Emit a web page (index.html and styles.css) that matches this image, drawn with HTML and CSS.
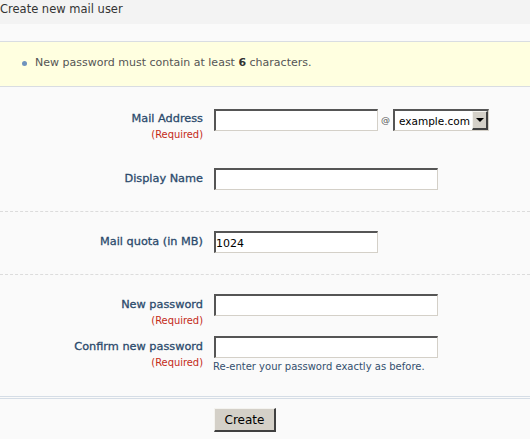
FILE: index.html
```html
<!DOCTYPE html>
<html>
<head>
<meta charset="utf-8">
<title>Create new mail user</title>
<link rel="stylesheet" href="styles.css">
</head>
<body>
<div class="page">
  <h1 class="title">Create new mail user</h1>
  <div class="notice">
    <ul class="notice-list">
      <li class="notice-item"><span class="dot"></span><span>New password must contain at least <b>6</b> characters.</span></li>
    </ul>
  </div>
  <form class="form">
    <div class="section first">
      <div class="row">
        <div class="label-cell">
          <label class="label">Mail Address</label>
          <span class="req">(Required)</span>
        </div>
        <div class="field-cell">
          <div class="inline">
            <input class="input short" type="text">
            <span class="at">@</span>
            <span class="select">
              <select class="select-native"><option>example.com</option></select>
              <span class="select-btn"><span class="tri"></span></span>
            </span>
          </div>
        </div>
      </div>
      <div class="row row-gap-lg">
        <div class="label-cell">
          <label class="label">Display Name</label>
        </div>
        <div class="field-cell">
          <input class="input long" type="text">
        </div>
      </div>
    </div>
    <div class="section dashed">
      <div class="row">
        <div class="label-cell">
          <label class="label">Mail quota (in MB)</label>
        </div>
        <div class="field-cell">
          <input class="input short" type="text" value="1024">
        </div>
      </div>
    </div>
    <div class="section dashed last">
      <div class="row">
        <div class="label-cell">
          <label class="label">New password</label>
          <span class="req">(Required)</span>
        </div>
        <div class="field-cell">
          <input class="input long" type="password">
        </div>
      </div>
      <div class="row row-gap-sm">
        <div class="label-cell">
          <label class="label">Confirm new password</label>
          <span class="req">(Required)</span>
        </div>
        <div class="field-cell">
          <input class="input long" type="password">
          <span class="hint">Re-enter your password exactly as before.</span>
        </div>
      </div>
    </div>
    <div class="footer">
      <button class="button" type="button">Create</button>
    </div>
  </form>
</div>
</body>
</html>
```

FILE: styles.css
```css
html, body {
  margin: 0;
  padding: 0;
  background: #fafafa;
}

body {
  font-family: "DejaVu Sans", sans-serif;
  font-size: 11px;
  color: #333;
  width: 530px;
  height: 439px;
  overflow: hidden;
}

.title {
  margin: 0;
  height: 24px;
  line-height: 19px;
  padding-left: 0;
  background: #f3f3f3;
  font-size: 11.5px;
  font-weight: normal;
  color: #333;
}

.notice {
  margin-top: 17px;
  background: #ffffe0;
  border-top: 1px solid #d9dde2;
  border-bottom: 1px solid #d9dde2;
  height: 44px;
  box-sizing: content-box;
}

.notice-list {
  list-style: none;
  margin: 0;
  padding: 14px 0 0 22px;
}

.notice-item {
  display: flex;
  align-items: center;
  line-height: 14px;
  color: #555;
}

.notice-item b {
  color: #333;
}

.dot {
  width: 5px;
  height: 5px;
  border-radius: 50%;
  background: #6f93bd;
  margin-right: 8px;
  margin-left: 0;
}

.form {
  margin: 0;
}

.section {
  padding: 19px 0 21px;
}

.section.first {
  padding-top: 21px;
}

.section.dashed {
  border-top: 1px dashed #dcdcdc;
  padding-top: 19px;
}

.section.last {
  padding-bottom: 22px;
}

.row {
  display: grid;
  grid-template-columns: 203px 1fr;
  column-gap: 11px;
  align-items: start;
}

.row-gap-lg {
  margin-top: 26px;
}

.row-gap-sm {
  margin-top: 8px;
}

.label-cell {
  display: flex;
  flex-direction: column;
  align-items: flex-end;
  padding-top: 4px;
  text-align: right;
}

.label {
  font-family: "DejaVu Sans", sans-serif;
  font-weight: normal;
  -webkit-text-stroke: 0.3px #2b4a6c;
  color: #2b4a6c;
  line-height: 14px;
  font-size: 11.3px;
}

.req {
  margin-top: 2px;
  font-family: "DejaVu Sans Condensed", "DejaVu Sans", sans-serif;
  font-stretch: condensed;
  color: #c42a18;
  font-size: 11px;
  line-height: 14px;
}

.field-cell {
  display: flex;
  flex-direction: column;
  align-items: flex-start;
}

.inline {
  display: flex;
  align-items: center;
}

.input {
  box-sizing: border-box;
  height: 22px;
  margin: 0;
  padding: 2px 2px 0 0;
  background: #fff;
  border-style: solid;
  border-width: 2px 1px 1px 2px;
  border-color: #555 #d4d0c8 #d4d0c8 #555;
  font-family: "DejaVu Sans", sans-serif;
  font-size: 11px;
  color: #000;
  outline: none;
}

.input.short {
  width: 164px;
}

.input.long {
  width: 224px;
}

.at {
  margin: 0 3px 0 3px;
  color: #555;
  font-size: 9px;
}

.select {
  box-sizing: border-box;
  display: flex;
  align-items: stretch;
  width: 96px;
  height: 22px;
  margin-top: 1px;
  background: #fff;
  border-style: solid;
  border-width: 2px 1px 1px 2px;
  border-color: #555 #d4d0c8 #d4d0c8 #555;
}

.select-native {
  -webkit-appearance: none;
  appearance: none;
  flex: 1;
  min-width: 0;
  border: 0;
  margin: 0;
  padding: 0 0 0 4px;
  background: #fff;
  font-family: "DejaVu Sans", sans-serif;
  font-size: 10.5px;
  color: #000;
  outline: none;
}

.select-btn {
  width: 16px;
  box-sizing: border-box;
  background: #d4d0c8;
  border-style: solid;
  border-width: 1px 2px 2px 1px;
  border-color: #f4f3ef #404040 #404040 #f4f3ef;
  display: flex;
  align-items: center;
  justify-content: center;
}

.tri {
  width: 0;
  height: 0;
  border-left: 4px solid transparent;
  border-right: 4px solid transparent;
  border-top: 4px solid #000;
}

.hint {
  margin-top: 2px;
  margin-left: -1px;
  font-size: 10px;
  line-height: 14px;
  color: #34506e;
}

.footer {
  border-top: 3px double #d5dde6;
  padding: 9px 0 0 214px;
}

.button {
  box-sizing: border-box;
  width: 62px;
  height: 24px;
  margin: 0;
  padding: 0;
  background: #d4d0c8;
  border-style: solid;
  border-width: 1px 2px 2px 1px;
  border-color: #f4f3ef #404040 #404040 #f4f3ef;
  font-family: "DejaVu Sans", sans-serif;
  font-size: 12px;
  color: #000;
}
```
